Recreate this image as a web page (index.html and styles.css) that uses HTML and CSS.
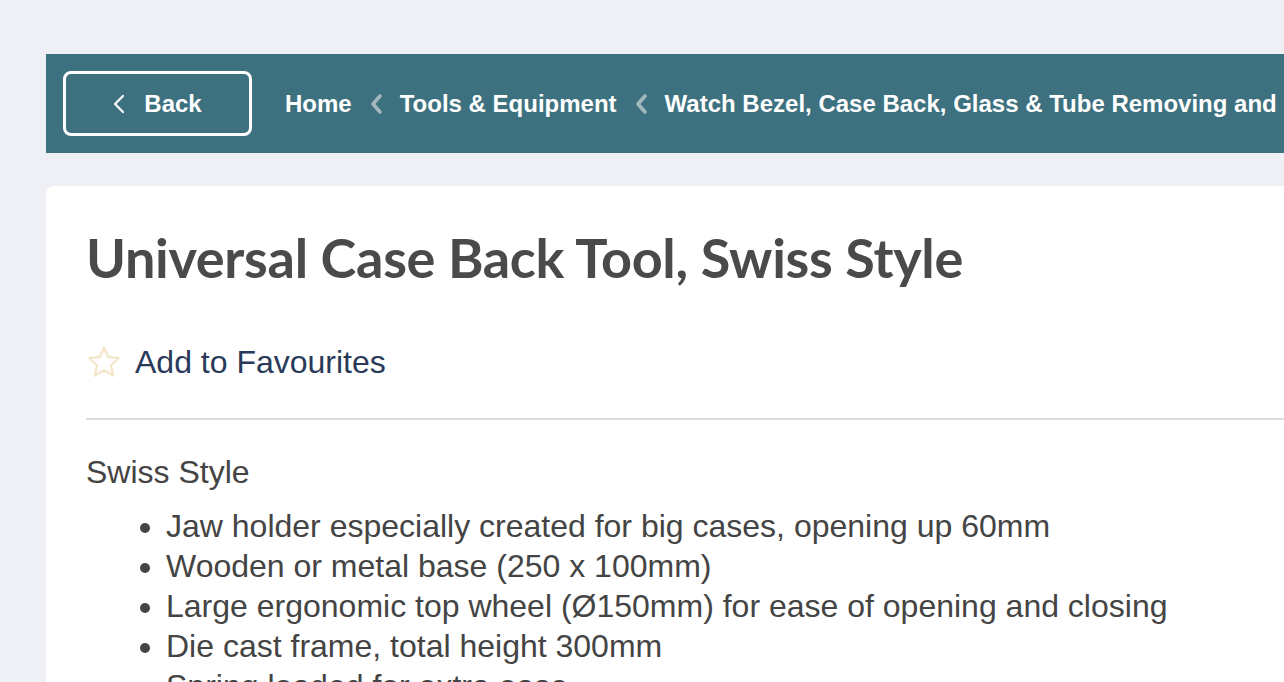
FILE: index.html
```html
<!DOCTYPE html>
<html>
<head>
<meta charset="utf-8">
<link rel="stylesheet" href="styles.css">
</head>
<body>
<div class="page">
  <nav class="crumbbar">
    <a class="back" href="#">
      <svg class="back-chev" width="12" height="20" viewBox="0 0 12 20"><path d="M10 2 L2 10 L10 18" fill="none" stroke="#fff" stroke-width="2.2" stroke-linecap="round" stroke-linejoin="round"/></svg>
      <span>Back</span>
    </a>
    <div class="crumbs">
      <a href="#">Home</a>
      <svg class="sep" width="14" height="22" viewBox="0 0 14 22"><path d="M11 3 L4 11 L11 19" fill="none" stroke="#a3b8bd" stroke-width="3.6" stroke-linecap="round" stroke-linejoin="round"/></svg>
      <a href="#">Tools &amp; Equipment</a>
      <svg class="sep" width="14" height="22" viewBox="0 0 14 22"><path d="M11 3 L4 11 L11 19" fill="none" stroke="#a3b8bd" stroke-width="3.6" stroke-linecap="round" stroke-linejoin="round"/></svg>
      <a href="#">Watch Bezel, Case Back, Glass &amp; Tube Removing and Fitting Tools</a>
    </div>
  </nav>
  <main class="card">
    <h1 class="title">Universal Case Back Tool, Swiss Style</h1>
    <a class="fav" href="#">
      <svg class="star" width="36" height="34" viewBox="0 0 36 34"><path d="M18 2.5 L22.3 12.2 L32.8 13.2 L24.9 20.2 L27.2 30.6 L18 25.2 L8.8 30.6 L11.1 20.2 L3.2 13.2 L13.7 12.2 Z" fill="none" stroke="#f3e5c8" stroke-width="2.2" stroke-linejoin="round"/></svg>
      <span>Add to Favourites</span>
    </a>
    <hr class="divider">
    <div class="desc">
      <p>Swiss Style</p>
      <ul>
        <li>Jaw holder especially created for big cases, opening up 60mm</li>
        <li>Wooden or metal base (250 x 100mm)</li>
        <li>Large ergonomic top wheel (Ø150mm) for ease of opening and closing</li>
        <li>Die cast frame, total height 300mm</li>
        <li>Spring loaded for extra ease</li>
      </ul>
    </div>
  </main>
</div>
</body>
</html>
```
FILE: styles.css
```css
html, body {
  margin: 0;
  padding: 0;
  background: #eff0f5;
  overflow: hidden;
}
body {
  width: 1284px;
  height: 682px;
  font-family: "Liberation Sans", Arial, sans-serif;
}
.page {
  padding: 54px 0 0 46px;
  display: flex;
  flex-direction: column;
  gap: 33px;
  width: 1400px;
}
.crumbbar {
  background: #3e717f;
  height: 99px;
  box-sizing: border-box;
  padding: 17px 0 17px 17px;
  display: flex;
  align-items: center;
  gap: 33px;
  white-space: nowrap;
}
.back {
  box-sizing: border-box;
  width: 189px;
  height: 65px;
  border: 3px solid #fff;
  border-radius: 8px;
  display: flex;
  align-items: center;
  justify-content: center;
  gap: 19px;
  color: #fff;
  text-decoration: none;
  font-weight: bold;
  font-size: 24px;
}
.crumbs {
  display: flex;
  align-items: center;
  gap: 17px;
}
.crumbs a {
  color: #fff;
  text-decoration: none;
  font-weight: bold;
  font-size: 24px;
}
.sep { display: block; }
.card {
  background: #fff;
  border-radius: 8px 0 0 8px;
  padding: 30px 0 0 40px;
  height: 520px;
}
.title {
  margin: 0;
  font-family: Lato, "Liberation Sans", sans-serif;
  font-weight: bold;
  font-size: 54px;
  line-height: 84px;
  color: #4a4a4a;
  letter-spacing: -0.3px;
}
.fav {
  display: flex;
  align-items: center;
  gap: 13px;
  margin-top: 42px;
  color: #2a3a5a;
  text-decoration: none;
  font-size: 32px;
  line-height: 40px;
}
.star { display: block; }
.divider {
  border: 0;
  border-top: 2px solid #dcdcdc;
  margin: 36px 0 0 0;
}
.desc {
  color: #444;
  font-size: 32px;
  line-height: 40px;
}
.desc p { margin: 32px 0 14px 0; }
.desc ul { margin: 0; padding-left: 80px; }
```
